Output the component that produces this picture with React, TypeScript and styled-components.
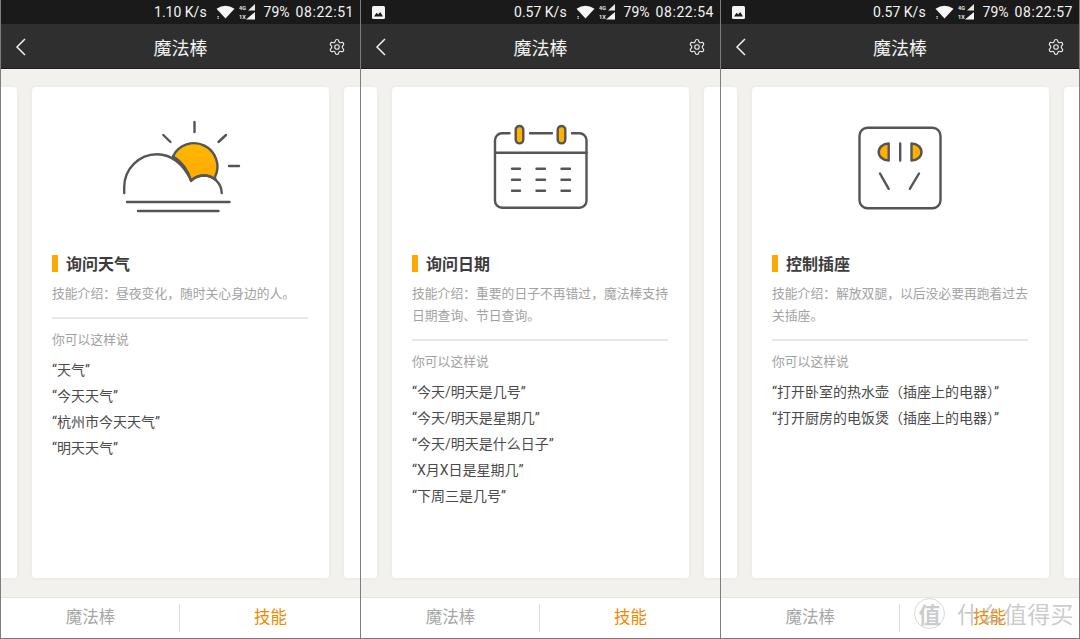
import React from "react";
import styled, { createGlobalStyle } from "styled-components";
import { Settings } from "lucide-react";

const GlobalStyle = createGlobalStyle`
  html, body {
    margin: 0;
    padding: 0;
    background: #fff;
  }
  body {
    font-family: "Roboto", "Noto Sans CJK SC", sans-serif;
  }
`;

const Page = styled.div`
  display: flex;
  width: 1080px;
  height: 639px;
  overflow: hidden;
`;

const Phone = styled.div`
  position: relative;
  box-sizing: border-box;
  width: 360px;
  height: 639px;
  display: flex;
  flex-direction: column;
  border-left: 1px solid #7c7c7c;
  border-bottom: 1px solid #7c7c7c;
  overflow: hidden;
  background: #f2f1ed;

  &:last-child {
    border-right: 1px solid #7c7c7c;
  }
`;

const StatusBar = styled.div`
  height: 24px;
  flex: none;
  display: flex;
  align-items: center;
  justify-content: space-between;
  padding: 0 6px 0 11px;
  background: #1a1a1a;
  color: #f4f4f4;
  font-size: 14px;
`;

const StatusRight = styled.div`
  display: flex;
  align-items: center;
  margin-left: auto;
`;

const Speed = styled.span`
  margin-right: 9px;
`;

const SignalSlot = styled.span`
  display: flex;
  margin-left: 4px;
`;

const Battery = styled.span`
  margin: 0 6px 0 9px;
`;

const Clock = styled.span`
  letter-spacing: 0.55px;
`;

const NavBar = styled.div`
  height: 42px;
  flex: none;
  display: flex;
  align-items: center;
  justify-content: space-between;
  padding: 2px 14px 0 14px;
  background: #2f2f2f;
  border-bottom: 1px solid #1e1e1e;
  color: #f2f2f2;
`;

const NavTitle = styled.div`
  font-family: "Noto Sans CJK SC", sans-serif;
  font-size: 18px;
  line-height: 42px;
`;

const NavSide = styled.div`
  width: 18px;
  display: flex;
  align-items: center;
`;

const Carousel = styled.div`
  flex: 1;
  min-height: 0;
  display: flex;
  gap: 15px;
  padding: 18px 0 19px;
`;

const PeekCard = styled.div<{ $side: "left" | "right" }>`
  flex: none;
  width: 16px;
  background: #fff;
  border-radius: ${(p) => (p.$side === "left" ? "0 4px 4px 0" : "4px 0 0 4px")};
  box-shadow: 0 0 4px rgba(0, 0, 0, 0.05);
`;

const Card = styled.div`
  flex: none;
  box-sizing: border-box;
  width: 297px;
  padding: 23px 20px 0;
  background: #fff;
  border-radius: 4px;
  box-shadow: 0 0 4px rgba(0, 0, 0, 0.05);
`;

const IconArea = styled.div`
  height: 110px;
  display: flex;
  justify-content: center;
  margin-bottom: 31px;
`;

const SkillTitle = styled.div`
  display: flex;
  align-items: center;
  gap: 8px;
  height: 24px;
  font-family: "Noto Sans CJK SC", sans-serif;
  font-size: 16px;
  font-weight: 700;
  color: #3c3c3c;

  &::before {
    content: "";
    width: 6px;
    height: 17px;
    background: #ffa800;
  }
`;

const Intro = styled.div`
  margin-top: 7px;
  font-family: "Noto Sans CJK SC", sans-serif;
  font-size: 12.8px;
  line-height: 22px;
  color: #a2a2a2;
`;

const Rule = styled.div`
  height: 2px;
  margin: 13px 1px 0 0;
  background: #e8e8e8;
`;

const SayLabel = styled.div`
  margin-top: 10px;
  font-family: "Noto Sans CJK SC", sans-serif;
  font-size: 12.8px;
  line-height: 20px;
  color: #a2a2a2;
`;

const Phrases = styled.div`
  margin-top: 8px;
  display: flex;
  flex-direction: column;
`;

const Phrase = styled.div`
  font-family: "Roboto", "Noto Sans CJK SC", sans-serif;
  font-size: 14px;
  line-height: 26.1px;
  color: #4a4a4a;
`;

const TabBar = styled.div`
  height: 40px;
  flex: none;
  display: flex;
  align-items: center;
  background: #fff;
  border-top: 1px solid #e6e5e0;
`;

const Tab = styled.div<{ $active?: boolean }>`
  flex: 1;
  padding-bottom: 4px;
  text-align: center;
  font-family: "Noto Sans CJK SC", sans-serif;
  font-size: 16.5px;
  color: ${(p) => (p.$active ? "#ee8a00" : "#a6a6a6")};
`;

const TabDivider = styled.div`
  width: 1px;
  height: 28px;
  margin: 0 1px 0 -1px;
  background: #dcdcdc;
`;

const Watermark = styled.div`
  position: absolute;
  left: 193px;
  bottom: 8px;
  display: flex;
  align-items: center;
  gap: 12px;
  color: rgba(170, 170, 170, 0.62);
  font-family: "Noto Sans CJK SC", sans-serif;
  pointer-events: none;
`;

const WatermarkBadge = styled.div`
  width: 29px;
  height: 29px;
  display: flex;
  align-items: center;
  justify-content: center;
  border: 1px solid rgba(190, 190, 190, 0.6);
  border-radius: 50%;
  font-size: 22px;
  font-weight: 700;
`;

const WatermarkName = styled.div`
  font-size: 23px;
  letter-spacing: 0.4px;
`;

const INK = "#555555";
const GOLD = "#ffb000";

const Line: React.FC<{ d: string; w?: number }> = ({ d, w = 2.4 }) => (
  <path d={d} fill="none" stroke={INK} strokeWidth={w} strokeLinecap="round" strokeLinejoin="round" />
);

// viewBox is offset so the path numbers read as px inside the phone
const IconSvg: React.FC<{ children: React.ReactNode }> = ({ children }) => (
  <svg width="150" height="110" viewBox="105.5 110 150 110">
    {children}
  </svg>
);

const WeatherIcon = () => (
  <IconSvg>
    <defs>
      <linearGradient id="sun" x1="0" y1="0" x2="0" y2="1">
        <stop offset="0" stopColor="#ffb800" />
        <stop offset="1" stopColor="#ffa900" />
      </linearGradient>
    </defs>
    <path
      d="M172.5 156.2A22 22 0 0 1 214.5 177L215 179.5Q209 175 203 175.5Q195 176 190.5 181Q186.5 165 172.5 156.2Z"
      fill="url(#sun)"
      stroke={INK}
      strokeWidth="2.4"
      strokeLinejoin="round"
    />
    <Line d="M123.7 193V187A33 33 0 0 1 156.5 154.2Q178 154.5 190.8 180.5Q196 175.5 203.5 175.5A18 18 0 0 1 221.2 193" />
    <Line d="M194 122V132M162.8 135L170 142M225.5 135L218 142M228.5 166H238.5" />
    <Line d="M126.5 202H229M137.5 211H218" />
  </IconSvg>
);

const CalendarIcon = () => (
  <IconSvg>
    <Line d="M149 133.3H141.5A7 7 0 0 0 134.5 140.3V200.7A7 7 0 0 0 141.5 207.7H219A7 7 0 0 0 226 200.7V140.3A7 7 0 0 0 219 133.3H211.5" />
    <Line d="M169.5 133.3H191.5M134.5 152.7H226" />
    <rect x="155.2" y="126" width="7.6" height="17.4" rx="3.8" fill={GOLD} stroke={INK} strokeWidth="2.4" />
    <rect x="197.2" y="126" width="7.6" height="17.4" rx="3.8" fill={GOLD} stroke={INK} strokeWidth="2.4" />
    <Line d="M151.5 168.7H159.5M176 168.7H184.5M201 168.7H209.5M151.5 179.7H159.5M176 179.7H184.5M201 179.7H209.5M151.5 190.7H159.5M176 190.7H184.5M201 190.7H209.5" />
  </IconSvg>
);

const SocketIcon = () => (
  <IconSvg>
    <rect x="139" y="127.7" width="81" height="80.6" rx="8" fill="none" stroke={INK} strokeWidth="2.4" />
    <path d="M168.2 143.5V160.5A10 8.5 0 0 1 168.2 143.5Z" fill={GOLD} stroke={INK} strokeWidth="2.4" strokeLinejoin="round" />
    <path d="M191 143.5V160.5A10 8.5 0 0 0 191 143.5Z" fill={GOLD} stroke={INK} strokeWidth="2.4" strokeLinejoin="round" />
    <Line d="M179.7 143.5V160.5M159.5 173.5L168.2 188.8M198.5 173.5L189.3 188.8" />
  </IconSvg>
);

const BackIcon = () => (
  <svg width="12" height="18" viewBox="0 0 12 18">
    <path d="M10 1L2 9L10 17" fill="none" stroke="#f2f2f2" strokeWidth="1.5" />
  </svg>
);

const WifiIcon = () => (
  <svg width="19" height="14" viewBox="0 0 19 14">
    <path d="M0.5 3.8Q9.5 -2.4 18.5 3.8L9.5 13.5Z" fill="#f6f6f6" />
    <rect x="1.5" y="11" width="1.2" height="1.2" fill="#f6f6f6" />
    <rect x="1.5" y="12.8" width="1.2" height="1" fill="#f6f6f6" />
  </svg>
);

const SignalIcon = () => (
  <svg width="16" height="16" viewBox="0 0 16 16">
    <text x="0" y="6" fontSize="5.5" fontWeight="700" fill="#e8e8e8" fontFamily="Roboto, sans-serif">4G</text>
    <text x="0" y="15" fontSize="5.5" fontWeight="700" fill="#e8e8e8" fontFamily="Roboto, sans-serif">1X</text>
    <path d="M9 6.5L16 0V6.5Z" fill="#e8e8e8" />
    <path d="M7 15.5L16 8V15.5Z" fill="#f6f6f6" />
  </svg>
);

const PictureIcon = () => (
  <svg width="13" height="13" viewBox="0 0 13 13">
    <rect width="13" height="13" rx="1.5" fill="#f4f4f4" />
    <path d="M2 10.5L4.6 6.8L6.2 8.6L8.2 6L11 10.5Z" fill="#1a1a1a" />
  </svg>
);

type Skill = {
  time: string;
  speed: string;
  notice?: boolean;
  icon: React.ReactNode;
  title: string;
  intro: string;
  phrases: string[];
  watermark?: boolean;
};

const skills: Skill[] = [
  {
    time: "08:22:51",
    speed: "1.10 K/s",
    icon: <WeatherIcon />,
    title: "询问天气",
    intro: "技能介绍：昼夜变化，随时关心身边的人。",
    phrases: ["“天气”", "“今天天气”", "“杭州市今天天气”", "“明天天气”"],
  },
  {
    time: "08:22:54",
    speed: "0.57 K/s",
    notice: true,
    icon: <CalendarIcon />,
    title: "询问日期",
    intro: "技能介绍：重要的日子不再错过，魔法棒支持日期查询、节日查询。",
    phrases: ["“今天/明天是几号”", "“今天/明天是星期几”", "“今天/明天是什么日子”", "“X月X日是星期几”", "“下周三是几号”"],
  },
  {
    time: "08:22:57",
    speed: "0.57 K/s",
    notice: true,
    icon: <SocketIcon />,
    title: "控制插座",
    intro: "技能介绍：解放双腿，以后没必要再跑着过去关插座。",
    phrases: ["“打开卧室的热水壶（插座上的电器）”", "“打开厨房的电饭煲（插座上的电器）”"],
    watermark: true,
  },
];

const App: React.FC = () => (
  <Page>
    <GlobalStyle />
    {skills.map((skill) => (
      <Phone key={skill.time}>
        <StatusBar>
          {skill.notice && <PictureIcon />}
          <StatusRight>
            <Speed>{skill.speed}</Speed>
            <WifiIcon />
            <SignalSlot>
              <SignalIcon />
            </SignalSlot>
            <Battery>79%</Battery>
            <Clock>{skill.time}</Clock>
          </StatusRight>
        </StatusBar>
        <NavBar>
          <NavSide>
            <BackIcon />
          </NavSide>
          <NavTitle>魔法棒</NavTitle>
          <NavSide>
            <Settings size={18} strokeWidth={1.5} color="#ececec" />
          </NavSide>
        </NavBar>
        <Carousel>
          <PeekCard $side="left" />
          <Card>
            <IconArea>{skill.icon}</IconArea>
            <SkillTitle>{skill.title}</SkillTitle>
            <Intro>{skill.intro}</Intro>
            <Rule />
            <SayLabel>你可以这样说</SayLabel>
            <Phrases>
              {skill.phrases.map((text) => (
                <Phrase key={text}>{text}</Phrase>
              ))}
            </Phrases>
          </Card>
          <PeekCard $side="right" />
        </Carousel>
        <TabBar>
          <Tab>魔法棒</Tab>
          <TabDivider />
          <Tab $active>技能</Tab>
        </TabBar>
        {skill.watermark && (
          <Watermark>
            <WatermarkBadge>值</WatermarkBadge>
            <WatermarkName>什么值得买</WatermarkName>
          </Watermark>
        )}
      </Phone>
    ))}
  </Page>
);

export default App;
